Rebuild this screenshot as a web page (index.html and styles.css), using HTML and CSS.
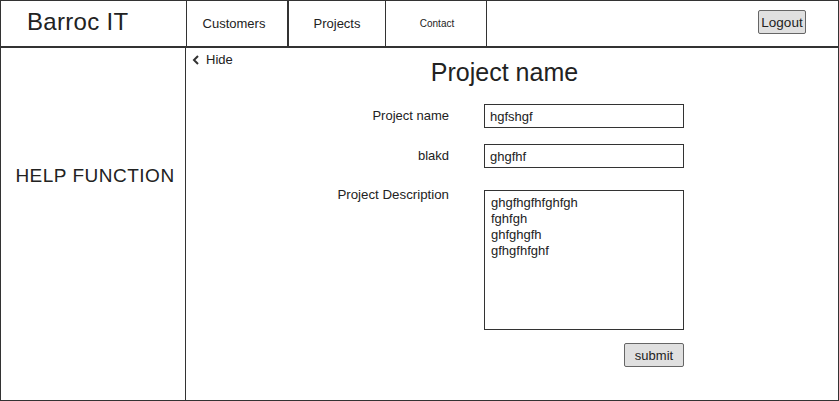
FILE: index.html
```html
<!DOCTYPE html>
<html>
<head>
<meta charset="utf-8">
<link rel="stylesheet" href="styles.css">
</head>
<body>
<div class="frame">
  <header class="topbar">
    <div class="brand">Barroc IT</div>
    <nav class="nav">
      <div class="nav-item customers">Customers</div>
      <div class="nav-item projects">Projects</div>
      <div class="nav-item contact">Contact</div>
    </nav>
    <div class="spacer">
      <button class="btn logout">Logout</button>
    </div>
  </header>
  <div class="body">
    <aside class="sidebar">HELP FUNCTION</aside>
    <main class="main">
      <div class="hide">
        <svg width="8" height="10" viewBox="0 0 8 10"><path d="M6 1 L2 5 L6 9" fill="none" stroke="#333" stroke-width="2"/></svg>
        <span>Hide</span>
      </div>
      <h1 class="title">Project name</h1>
      <form class="form">
        <label class="lbl">Project name</label>
        <div class="field">hgfshgf</div>
        <label class="lbl">blakd</label>
        <div class="field">ghgfhf</div>
        <label class="lbl lbl-top">Project Description</label>
        <div class="area">ghgfhgfhfghfgh<br>fghfgh<br>ghfghgfh<br>gfhgfhfghf</div>
        <div class="actions"><button class="btn submit" type="button">submit</button></div>
      </form>
    </main>
  </div>
</div>
</body>
</html>
```
FILE: styles.css
```css
* { box-sizing: border-box; }
html, body { margin: 0; padding: 0; background: #fff; }
body { font-family: "Liberation Sans", Arial, sans-serif; color: #222; }

.frame {
  width: 839px;
  height: 401px;
  border: 1px solid #333;
  display: flex;
  flex-direction: column;
}

.topbar {
  display: flex;
  height: 47px;
  border-bottom: 2px solid #333;
  flex: none;
}
.brand {
  width: 186px;
  border-right: 1px solid #333;
  font-size: 24px;
  padding-left: 26px;
  padding-top: 7px;
  letter-spacing: 0.3px;
}
.nav { display: flex; }
.nav-item {
  display: flex;
  align-items: center;
  justify-content: center;
  font-size: 13px;
  padding-bottom: 1px;
}
.customers { width: 102px; border-right: 2px solid #333; padding-right: 6px; }
.projects { width: 97px; border-right: 1px solid #333; }
.contact { width: 101px; border-right: 1px solid #333; font-size: 10px; padding-left: 2px; }
.spacer {
  flex: 1;
  display: flex;
  justify-content: flex-end;
  align-items: flex-start;
  padding: 9px 32px 0 0;
}
.btn {
  font-family: "Liberation Sans", Arial, sans-serif;
  background: #e0e0e0;
  border: 1px solid #666;
  border-radius: 2px;
  color: #222;
  font-size: 13px;
  height: 24px;
  padding: 0;
  cursor: pointer;
}
.logout { width: 48px; font-size: 13.5px; }

.body { display: flex; flex: 1; min-height: 0; }
.sidebar {
  width: 185px;
  border-right: 1px solid #333;
  display: flex;
  align-items: center;
  justify-content: center;
  font-size: 19px;
  padding-bottom: 96px;
  padding-left: 4px;
  letter-spacing: 0.5px;
}
.main { flex: 1; position: relative; padding: 4px 0 0 6px; }
.hide {
  display: flex;
  align-items: center;
  gap: 6px;
  font-size: 13px;
}
.title {
  margin: -9px 0 0 0;
  font-weight: normal;
  font-size: 25px;
  text-align: center;
  padding-right: 21px;
}
.form {
  display: grid;
  grid-template-columns: 149px 200px;
  column-gap: 35px;
  row-gap: 16px;
  margin: 17px 0 0 108px;
  font-size: 13px;
}
.lbl {
  text-align: right;
  align-self: center;
  padding-bottom: 2px;
}
.lbl-top { align-self: start; padding-top: 0; margin-top: 3px; font-size: 13.3px; }
.field {
  height: 24px;
  border: 1px solid #333;
  padding: 4px 5px;
  line-height: 15px;
}
.area {
  height: 140px;
  border: 1px solid #333;
  padding: 4px 6px;
  line-height: 16px;
  margin-top: 6px;
}
.actions {
  grid-column: 2;
  display: flex;
  justify-content: flex-end;
  margin-top: -3px;
}
.submit { width: 60px; }
```
